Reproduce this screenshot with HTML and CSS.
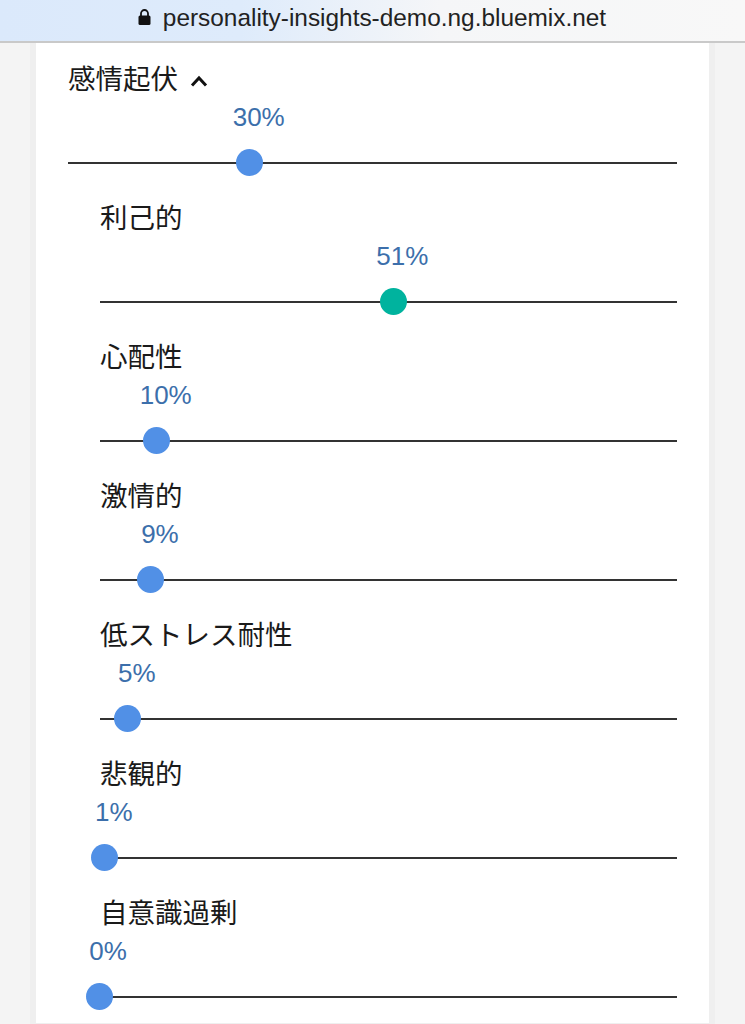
FILE: index.html
```html
<!DOCTYPE html>
<html lang="ja">
<head>
<meta charset="utf-8">
<meta name="viewport" content="width=device-width,initial-scale=1.0">
<title>Personality Insights</title>
<link rel="stylesheet" href="styles.css">
</head>
<body>
<header class="addressbar">
  <svg class="lock" viewBox="0 0 13 16" width="13" height="16"><path d="M3 7V4.5a3.5 3.5 0 0 1 7 0V7" fill="none" stroke="#111" stroke-width="1.8"/><rect x="0.5" y="6.5" width="12" height="9.5" rx="1.5" fill="#111"/></svg>
  <span class="url">personality-insights-demo.ng.bluemix.net</span>
</header>

<main class="card">
  <section class="trait">
    <h2 class="title">感情起伏<svg class="chevron" viewBox="0 0 18 12" width="18" height="12"><path d="M2 10.5L9 3l7 7.5" fill="none" stroke="#111" stroke-width="3"/></svg></h2>
    <div class="value" style="--p: 30"><span>30%</span></div>
    <div class="slider" style="--p: 30"><i class="thumb"></i></div>
  </section>

  <section class="trait sub">
    <h2 class="title">利己的</h2>
    <div class="value" style="--p: 51"><span>51%</span></div>
    <div class="slider" style="--p: 51"><i class="thumb high"></i></div>
  </section>

  <section class="trait sub">
    <h2 class="title">心配性</h2>
    <div class="value" style="--p: 10"><span>10%</span></div>
    <div class="slider" style="--p: 10"><i class="thumb"></i></div>
  </section>

  <section class="trait sub">
    <h2 class="title">激情的</h2>
    <div class="value" style="--p: 9"><span>9%</span></div>
    <div class="slider" style="--p: 9"><i class="thumb"></i></div>
  </section>

  <section class="trait sub">
    <h2 class="title">低ストレス耐性</h2>
    <div class="value" style="--p: 5"><span>5%</span></div>
    <div class="slider" style="--p: 5"><i class="thumb"></i></div>
  </section>

  <section class="trait sub">
    <h2 class="title">悲観的</h2>
    <div class="value" style="--p: 1"><span>1%</span></div>
    <div class="slider" style="--p: 1"><i class="thumb"></i></div>
  </section>

  <section class="trait sub">
    <h2 class="title">自意識過剰</h2>
    <div class="value" style="--p: 0"><span>0%</span></div>
    <div class="slider" style="--p: 0"><i class="thumb"></i></div>
  </section>
</main>
</body>
</html>
```

FILE: styles.css
```css
html, body {
  margin: 0;
  height: 1024px;
  overflow: hidden;
}
body {
  background-color: #f4f4f4;
  font-family: "Liberation Sans", "Noto Sans CJK JP", sans-serif;
}
.addressbar {
  position: relative;
  z-index: 1;
  display: flex;
  align-items: center;
  justify-content: center;
  gap: 12px;
  box-sizing: border-box;
  height: 43px;
  padding: 0 1px 5px 0;
  border-bottom: 2px solid #c9c9c9;
  background: linear-gradient(90deg, #dbe9fb 0, #deebfb 240px, #f5f6f8 440px, #f8f8f8 100%);
}
.lock {
  display: block;
  margin-top: -2px;
}
.url {
  font-size: 24.4px;
  color: #222;
}
.card {
  display: flex;
  flex-direction: column;
  gap: 9px;
  box-sizing: border-box;
  width: 673px;
  margin: 0 0 0 36px;
  padding: 16px 32px 0;
  background-color: #fff;
  box-shadow: 0 0 0 6px #efefef;
}
.trait.sub {
  margin-left: 32px;
}
.title {
  display: flex;
  align-items: center;
  box-sizing: border-box;
  height: 40px;
  margin: 0;
  padding-bottom: 4px;
  font-family: "Noto Sans CJK JP", sans-serif;
  font-size: 27.5px;
  font-weight: 400;
  color: #1a1a1a;
}
.chevron {
  margin: 7px 0 0 12px;
}
.value {
  display: flex;
  align-items: center;
  justify-content: center;
  width: 0;
  height: 36px;
  margin-left: calc(var(--p) * 1% + 8px);
  font-size: 26px;
  color: #3c6fab;
}
.slider {
  position: relative;
  height: 54px;
  background: linear-gradient(#333, #333) 0 27px / 100% 2px no-repeat;
}
.thumb {
  position: absolute;
  top: 14px;
  left: calc(var(--p) * 1% - 14.5px);
  width: 27px;
  height: 27px;
  border-radius: 50%;
  background-color: #5190e6;
}
.thumb.high {
  background-color: #00b39e;
}
```
